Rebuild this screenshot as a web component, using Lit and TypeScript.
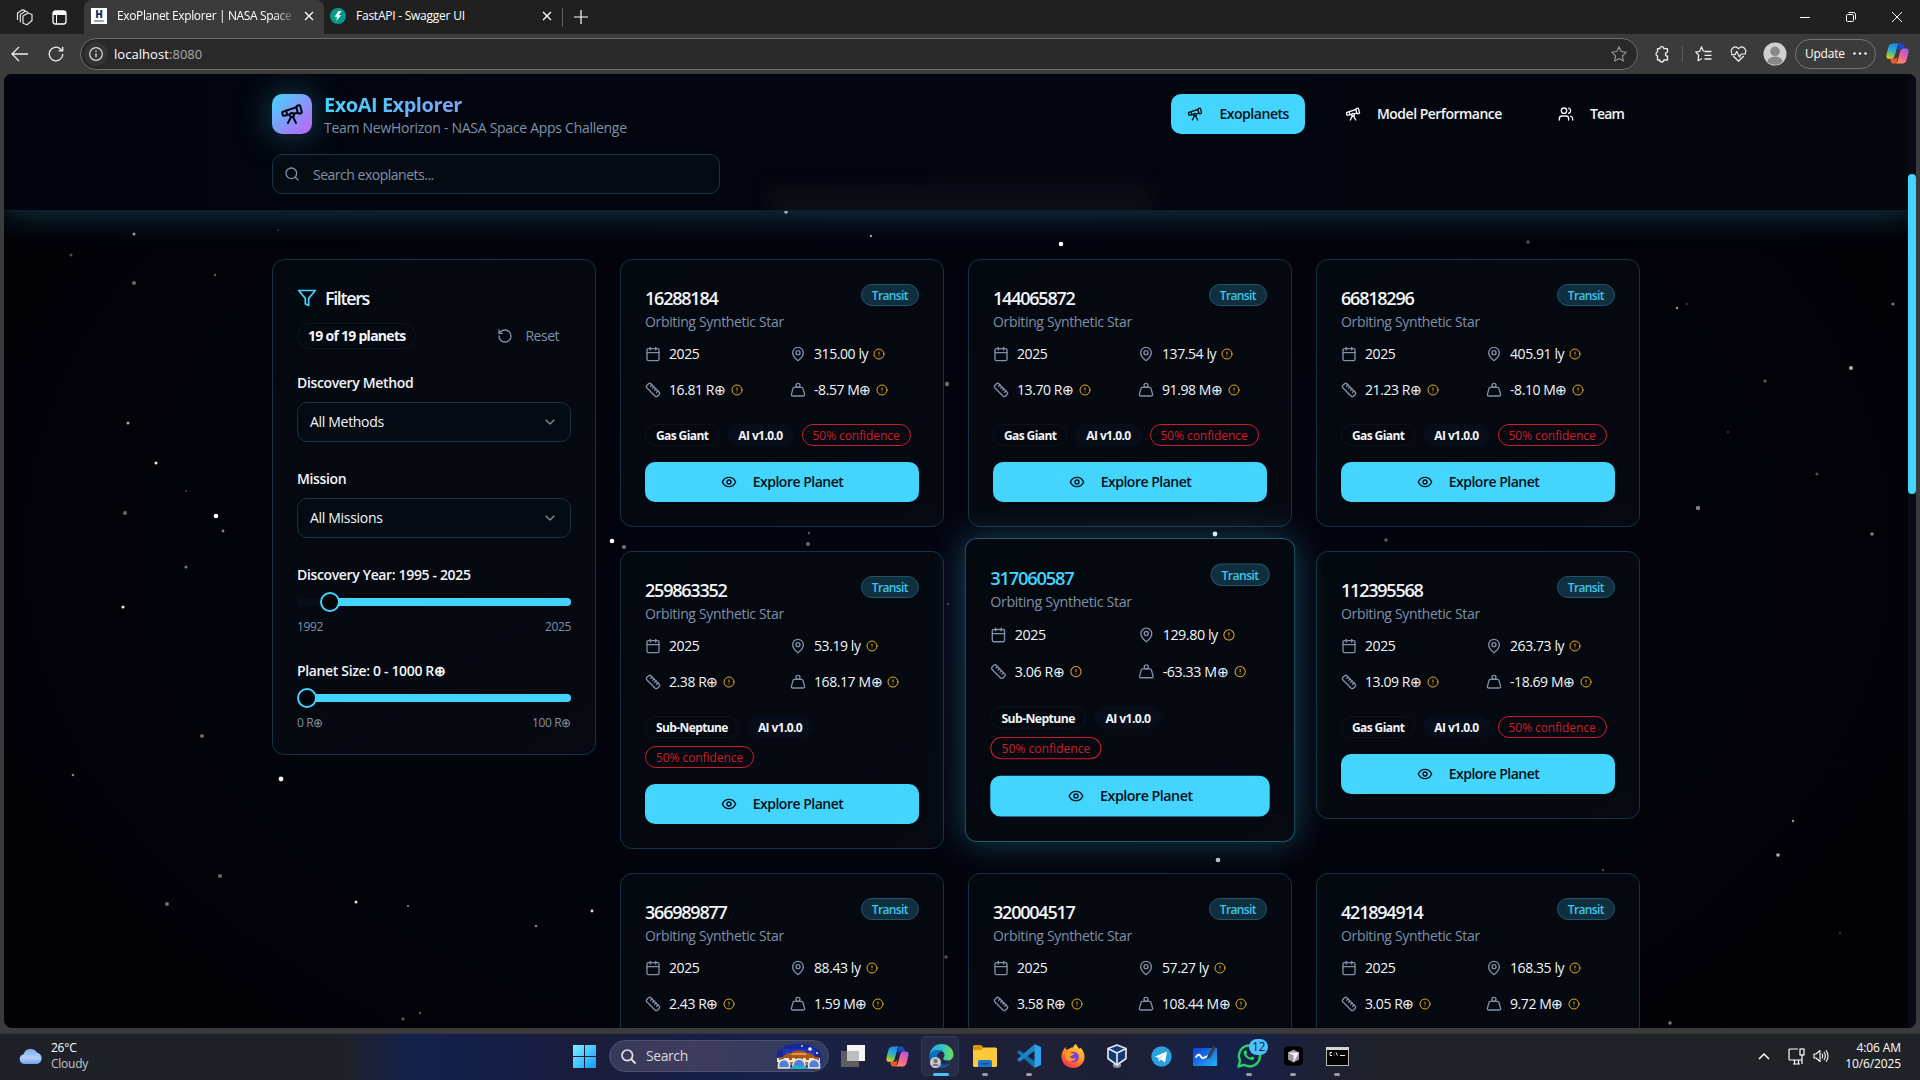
import { LitElement, html, svg, css, nothing } from "lit";
import { customElement, property } from "lit/decorators.js";
import { classMap } from "lit/directives/class-map.js";
import { styleMap } from "lit/directives/style-map.js";

interface Planet {
  id: string;
  dist: string;
  radius: string;
  mass: string;
  kind: string;
  active?: boolean;
}

const planets: Planet[] = [
  { id: "16288184", dist: "315.00", radius: "16.81", mass: "-8.57", kind: "Gas Giant" },
  { id: "144065872", dist: "137.54", radius: "13.70", mass: "91.98", kind: "Gas Giant" },
  { id: "66818296", dist: "405.91", radius: "21.23", mass: "-8.10", kind: "Gas Giant" },
  { id: "259863352", dist: "53.19", radius: "2.38", mass: "168.17", kind: "Sub-Neptune" },
  { id: "317060587", dist: "129.80", radius: "3.06", mass: "-63.33", kind: "Sub-Neptune", active: true },
  { id: "112395568", dist: "263.73", radius: "13.09", mass: "-18.69", kind: "Gas Giant" },
  { id: "366989877", dist: "88.43", radius: "2.43", mass: "1.59", kind: "Sub-Neptune" },
  { id: "320004517", dist: "57.27", radius: "3.58", mass: "108.44", kind: "Sub-Neptune" },
  { id: "421894914", dist: "168.35", radius: "3.05", mass: "9.72", kind: "Sub-Neptune" },
];

/* x, y, radius, opacity */
const stars: number[][] = [
  [134, 160, 1.5, 0.6], [71, 181, 1.5, 0.3], [134, 209, 2, 0.4], [215, 201, 1.3, 0.35], [278, 156, 1, 0.2],
  [128, 349, 1.5, 0.65], [156, 389, 1.5, 0.9], [125, 439, 2, 0.4], [216, 442, 2.3, 1], [223, 457, 1.4, 0.5],
  [186, 493, 1.6, 0.45], [186, 417, 1, 0.25], [123, 533, 1.6, 0.9], [202, 662, 2, 0.4], [73, 701, 1.3, 0.5],
  [281, 705, 2.4, 0.95], [220, 802, 2, 0.4], [167, 830, 2, 0.45], [356, 828, 1.5, 0.9], [408, 832, 1, 0.6],
  [536, 852, 1.3, 0.5], [592, 837, 1.4, 0.9], [420, 939, 1, 0.5], [403, 945, 1.8, 0.3], [786, 138, 1.8, 0.7],
  [871, 162, 1.2, 0.6], [1061, 170, 2.3, 1], [947, 310, 2.2, 0.4], [1528, 168, 1.8, 0.3], [1677, 234, 1.2, 0.6],
  [1687, 230, 1, 0.25], [1893, 230, 1.6, 0.45], [1851, 294, 2, 0.7], [1698, 434, 2.2, 0.5], [1817, 400, 1.6, 0.3],
  [1728, 358, 1, 0.25], [1872, 460, 1.8, 0.5], [1765, 307, 1.8, 0.3], [612, 467, 2.3, 1], [624, 473, 2, 0.45],
  [809, 459, 1.2, 0.35], [808, 470, 2, 0.4], [1215, 460, 2.4, 0.95], [1218, 786, 2.3, 0.75], [1386, 466, 1.8, 0.35],
  [1793, 747, 1.2, 0.6], [1778, 781, 1.8, 0.7], [946, 883, 1.8, 0.3], [948, 530, 1.2, 0.25], [1603, 796, 1.2, 0.3],
  [1670, 949, 1.8, 0.45], [1840, 859, 1, 0.25],
];

const icons: Record<string, unknown> = {
  telescope: svg`<path d="m10.065 12.493-6.18 1.318a.934.934 0 0 1-1.108-.702l-.537-2.15a1.07 1.07 0 0 1 .691-1.265l13.504-4.44"/><path d="m13.56 11.747 4.332-.924"/><path d="m16 21-3.105-6.21"/><path d="M16.485 5.94a2 2 0 0 1 1.455-2.425l1.09-.272a1 1 0 0 1 1.212.727l1.515 6.06a1 1 0 0 1-.727 1.213l-1.09.272a2 2 0 0 1-2.425-1.455z"/><path d="m6.158 8.633 1.114 4.456"/><path d="m8 21 3.105-6.21"/><circle cx="12" cy="13" r="2"/>`,
  users: svg`<path d="M16 21v-2a4 4 0 0 0-4-4H6a4 4 0 0 0-4 4v2"/><circle cx="9" cy="7" r="4"/><path d="M22 21v-2a4 4 0 0 0-3-3.87"/><path d="M16 3.13a4 4 0 0 1 0 7.75"/>`,
  search: svg`<circle cx="11" cy="11" r="8"/><path d="m21 21-4.3-4.3"/>`,
  filter: svg`<path d="M22 3H2l8 9.46V19l4 2v-8.54z"/>`,
  reset: svg`<path d="M3 12a9 9 0 1 0 9-9 9.75 9.75 0 0 0-6.74 2.74L3 8"/><path d="M3 3v5h5"/>`,
  chevron: svg`<path d="m6 9 6 6 6-6"/>`,
  calendar: svg`<path d="M8 2v4"/><path d="M16 2v4"/><rect x="3" y="4" width="18" height="18" rx="2"/><path d="M3 10h18"/>`,
  pin: svg`<path d="M20 10c0 6-8 12-8 12s-8-6-8-12a8 8 0 0 1 16 0Z"/><circle cx="12" cy="10" r="3"/>`,
  ruler: svg`<path d="M21.3 15.3a2.4 2.4 0 0 1 0 3.4l-2.6 2.6a2.4 2.4 0 0 1-3.4 0L2.7 8.7a2.41 2.41 0 0 1 0-3.4l2.6-2.6a2.41 2.41 0 0 1 3.4 0Z"/><path d="m14.5 12.5 2-2"/><path d="m11.5 9.5 2-2"/><path d="m8.5 6.5 2-2"/><path d="m17.5 15.5 2-2"/>`,
  weight: svg`<circle cx="12" cy="5" r="3"/><path d="M6.5 8a2 2 0 0 0-1.905 1.46L2.1 18.5A2 2 0 0 0 4 21h16a2 2 0 0 0 1.925-2.54L19.4 9.5A2 2 0 0 0 17.48 8Z"/>`,
  alert: svg`<circle cx="12" cy="12" r="10"/><path d="M12 8v4"/><path d="M12 16h.01"/>`,
  eye: svg`<path d="M2 12s3-7 10-7 10 7 10 7-3 7-10 7-10-7-10-7Z"/><circle cx="12" cy="12" r="3"/>`,
};

const icon = (name: string, size = 16) => html`<svg class="ic" width=${size} height=${size} viewBox="0 0 24 24"
  fill="none" stroke="currentColor" stroke-width="2" stroke-linecap="round" stroke-linejoin="round">${icons[name]}</svg>`;

const glyph = (w: number, h: number, body: unknown) =>
  html`<svg class="ic" width=${w} height=${h} viewBox="0 0 ${w} ${h}" fill="none">${body}</svg>`;

const copilot = (id: string, size: number) => html`<svg class="ic" width=${size} height=${size} viewBox="0 0 24 24">
  <defs>
    <linearGradient id="${id}a" x1="0.6" y1="0" x2="0.2" y2="1"><stop offset="0" stop-color="#1b8be0"/><stop offset=".45" stop-color="#2aa9d8"/><stop offset=".75" stop-color="#7fc24a"/><stop offset="1" stop-color="#f3cf2c"/></linearGradient>
    <linearGradient id="${id}b" x1="0.8" y1="0" x2="0.2" y2="1"><stop offset="0" stop-color="#a657e8"/><stop offset=".5" stop-color="#f0609a"/><stop offset="1" stop-color="#ff9a4c"/></linearGradient>
  </defs>
  <path d="M13 1.5h3c2 0 2.600 1 3.200 3l.6 2.200h-4c-2 0-3 .8-3.600 2.800z" fill="#174ac4"/>
  <path d="M11 22.500h-3c-2 0-2.600-1-3.200-3l-.5-2h4c2 0 3-.8 3.500-2.800z" fill="#f0552d"/>
  <path d="M7.500 1.500h7c-1.500 0-2.300 1.400-2.700 3l-2.600 9.500c-.6 2.500-1.600 3.500-3.600 3.500h-2.600c-2.400 0-3-2-2.400-4.500l2-8c.6-2.300 2.400-3.500 4.900-3.500z" fill="url(#${id}a)"/>
  <path d="M16.500 22.500h-7c1.500 0 2.300-1.400 2.700-3l2.600-9.500c.6-2.500 1.600-3.300 3.600-3.300h2.600c2.400 0 3 2 2.400 4.300l-2 8c-.6 2.300-2.400 3.500-4.900 3.500z" fill="url(#${id}b)"/>
</svg>`;

const base = css`
  * { box-sizing: border-box; }
  .ic { display: block; flex: none; overflow: visible; }
`;

@customElement("browser-chrome")
class BrowserChrome extends LitElement {
  static styles = [base, css`
    :host { display: block; color: #fff; font: 400 12px/16px "Open Sans", "Noto Sans", sans-serif; letter-spacing: -0.02em; }
    .tabs { display: flex; align-items: center; height: 34px; background: #202020; }
    .lead { display: flex; align-items: center; gap: 19px; width: 84px; padding-left: 16px; }
    .tab { display: flex; align-items: center; height: 34px; width: 240px; padding: 0 10px 2px 7px; }
    .tab.on { background: #3b3b3b; border-radius: 8px 8px 0 0; }
    .tab.off { padding-left: 6px; padding-right: 10px; width: 238px; }
    .fav { display: grid; place-items: center; width: 16px; height: 16px; flex: none; margin-right: 10px; }
    .fav.h { background: #fff; color: #14355c; font: 800 10px/9px "Open Sans", sans-serif; align-content: center; }
    .fav.h i { display: block; width: 10px; height: 2px; margin-top: 1px; background: #9aa6b3; }
    .fav.f { border-radius: 50%; background: #05998b; }
    .name { flex: 1; white-space: nowrap; overflow: hidden; }
    .on .name { margin-right: 8px; letter-spacing: -0.03em; -webkit-mask-image: linear-gradient(90deg, #000 88%, transparent); mask-image: linear-gradient(90deg, #000 88%, transparent); }
    .rule { width: 1px; height: 19px; background: #5c5c5c; margin-right: 11px; }
    .win { display: flex; align-items: center; margin-left: auto; gap: 36px; padding-right: 18px; }
    .bar { display: flex; align-items: center; height: 40px; padding-left: 11px; background: #3b3b3b; padding-bottom: 1px; }
    .nav { display: flex; align-items: center; gap: 20px; width: 69px; }
    .url { display: flex; align-items: center; width: 1558px; height: 32px; border: 1px solid #6d6d6d; border-radius: 16px; background: #292929; padding: 0 10px 0 3px; color: #a9a9a9; font-size: 13px; letter-spacing: 0.004em; margin-top: 1px; }
    .site { display: grid; place-items: center; width: 24px; height: 24px; border-radius: 50%; background: #343434; margin-right: 6px; color: #ddd; }
    .url b { font-weight: 400; color: #fff; }
    .grow { flex: 1; }
    .tools { display: flex; align-items: center; flex: 1; padding-left: 16px; color: #e8e8e8; }
    .tools .sep { width: 1px; height: 16px; background: #5c5c5c; margin: 0 12px 0 12px; }
    .health { display: block; margin: 0 16px 0 18px; }
    .update { display: flex; align-items: center; justify-content: space-between; height: 30px; width: 81px; border: 1px solid #757575; border-radius: 15px; padding: 0 8px 0 9px; color: #fff; margin: 0 10px 0 8px; white-space: nowrap; }
  `];
  render() {
    const close = glyph(10, 10, svg`<path d="M1 1l8 8M9 1l-8 8" stroke="#fff" stroke-width="1.300"/>`);
    return html`
      <div class="tabs">
        <div class="lead">
          ${glyph(17, 17, svg`<g stroke="#e6e6e6" stroke-width="1.200" stroke-linejoin="round"><path d="M7 7l5-3 4 1.500v6l-5 4.300-4-1.500z"/><path d="M4.300 13.300V5.500l5-3.300 3 1"/><path d="M1.500 11V4l5-3.200 3 .8"/></g>`)}
          ${glyph(15, 15, svg`<rect x="1" y="1" width="13" height="13" rx="2.500" stroke="#fff" stroke-width="1.300"/><path d="M1 3.500a2.500 2.500 0 0 1 2.500-2.500h8a2.500 2.500 0 0 1 2.500 2.500v1.500h-13z" fill="#fff"/><path d="M4.500 5v9" stroke="#fff"/>`)}
        </div>
        <div class="tab on">
          <span class="fav h">H<i></i></span>
          <span class="name">ExoPlanet Explorer | NASA Space Apps</span>${close}
        </div>
        <div class="tab off">
          <span class="fav f">${glyph(10, 10, svg`<path d="M5.500 0L1.500 5.800h2.700L3.200 10 8.200 4.200H5.600L8.500 0z" fill="#fff"/>`)}</span>
          <span class="name">FastAPI - Swagger UI</span>${close}
        </div>
        <div class="rule"></div>
        ${glyph(14, 14, svg`<path d="M7 0v14M0 7h14" stroke="#fff" stroke-width="1.200"/>`)}
        <div class="win">
          ${glyph(10, 10, svg`<path d="M0 5.500h10" stroke="#fff"/>`)}
          ${glyph(10, 10, svg`<rect x=".5" y="2.500" width="7" height="7" rx="1.200" stroke="#fff"/><path d="M2.500.5h5a2 2 0 0 1 2 2v5" stroke="#fff"/>`)}
          ${glyph(10, 10, svg`<path d="M0 0l10 10M10 0L0 10" stroke="#fff"/>`)}
        </div>
      </div>
      <div class="bar">
        <div class="nav">
          ${glyph(17, 16, svg`<path d="M8 1L1 8l7 7M1 8h16" stroke="#eee" stroke-width="1.300"/>`)}
          ${glyph(16, 16, svg`<path d="M14.800 8A6.800 6.800 0 1 1 12.500 2.900L14.500 4.700M14.700.7v4.200h-4.200" stroke="#eee" stroke-width="1.300"/>`)}
        </div>
        <div class="url">
          <span class="site">${glyph(14, 14, svg`<circle cx="7" cy="7" r="6.300" stroke="#ddd" stroke-width="1.200"/><path d="M7 6.200v4M7 3.500v1.400" stroke="#ddd" stroke-width="1.300"/>`)}</span>
          <span><b>localhost</b>:8080</span><span class="grow"></span>
          ${glyph(16, 16, svg`<path d="M8 .8l2.200 4.700 5 .7-3.700 3.600.9 5.200L8 12.500 3.600 15l.9-5.200L.8 6.200l5-.7z" stroke="#9a9a9a" stroke-width="1.100" stroke-linejoin="round"/>`)}
        </div>
        <div class="tools">
          ${glyph(16, 16, svg`<path d="M3.500 2.700h2.300a2 2 0 0 1 4 0H13.500v3.500a2 2 0 1 0 0 4V14H9.800a2 2 0 0 1-4 0H3.500v-3.800a2.200 2.200 0 0 1 0-4.200z" stroke="#eee" stroke-width="1.300" stroke-linejoin="round"/>`)}
          <span class="sep"></span>
          ${glyph(17, 16, svg`<path d="M9.500 5.200L8.300 5 6.500.8 4.700 5.400.7 6l3 3.200L3 14.700l4-2.300" stroke="#eee" stroke-width="1.200" stroke-linejoin="round"/><path d="M9.500 5.500h7M9.500 9.300h7M9.500 13h7" stroke="#eee" stroke-width="1.300"/>`)}
          <span class="health">${glyph(17, 16, svg`<path d="M2 7.500C-.5 3.500 4.500-1.500 8.500 2.700c4-4.200 9 .8 6.500 4.800M3.200 10l5.300 5.200 5.300-5.200M1 8.700h4l1.700-3.200 2.800 5.500 1.700-3h4.800" stroke="#eee" stroke-width="1.200" stroke-linejoin="round"/>`)}</span>
          ${glyph(24, 24, svg`<circle cx="12" cy="12" r="11.500" fill="#d2d0ce"/><circle cx="12" cy="9.300" r="4.800" fill="#8a8886"/><path d="M4.500 20a7.500 5.500 0 0 1 15 0a11.500 11.500 0 0 1-15 0" fill="#8a8886"/>`)}
          <span class="update">Update ${glyph(14, 3, svg`<circle cx="1.500" cy="1.500" r="1.200" fill="#fff"/><circle cx="7" cy="1.500" r="1.200" fill="#fff"/><circle cx="12.500" cy="1.500" r="1.200" fill="#fff"/>`)}</span>
          ${copilot("t", 23)}
        </div>
      </div>`;
  }
}

@customElement("planet-card")
class PlanetCard extends LitElement {
  @property({ attribute: false }) planet!: Planet;
  static styles = [base, css`
    :host { display: block; }
    .card { position: relative; padding: 24px; border: 1px solid #133543; border-radius: 12px; background: linear-gradient(145deg, #04080f, #060911); color: #f2f5f8; }
    .card.active { border-color: #1f5a70; transform: translateY(-10px) scale(1.02); box-shadow: 0 0 34px rgba(67, 213, 254, .3); }
    .head { display: flex; justify-content: space-between; align-items: flex-start; }
    h3 { margin: 0; font: 650 18px/28px "Open Sans", sans-serif; letter-spacing: -0.068em; }
    .active h3 { color: #43d5fe; font-weight: 600; }
    .sub { font-size: 14px; line-height: 20px; color: #8090a6; letter-spacing: -0.025em; }
    .tag { height: 22px; padding: 0 10px; border: 1px solid #205569; border-radius: 11px; background: #102f3e; color: #3ec6ec; font-size: 12px; line-height: 21px; font-weight: 600; letter-spacing: -0.05em; }
    .stats { display: grid; grid-template-columns: 1fr 1fr; gap: 16px; margin: 12px 0 24px; }
    .stat { display: flex; align-items: center; gap: 8px; height: 20px; font-size: 14px; line-height: 20px; letter-spacing: -0.03em; white-space: nowrap; }
    .stat > .ic { color: #8090a6; }
    .warn { color: #e8a81e; margin-left: -3px; }
    .tags { display: flex; flex-wrap: wrap; gap: 8px; margin-bottom: 16px; }
    .pill { height: 22px; padding: 0 10px; border: 1px solid #0d1420; border-radius: 11px; font-size: 12px; line-height: 22px; font-weight: 700; letter-spacing: -0.05em; white-space: nowrap; }
    .pill.solid { border-color: #080e19; background: #080e19; }
    .pill.low { border-color: #cb1e2d; color: #cb1e2d; font-weight: 400; letter-spacing: -0.006em; }
    .go { display: flex; align-items: center; justify-content: center; gap: 16px; height: 40px; border-radius: 10px; background: #43d5fe; color: #03111a; font-size: 14px; font-weight: 600; letter-spacing: -0.035em; line-height: 20px; }
  `];
  render() {
    const p = this.planet;
    const warn = html`<span class="warn">${icon("alert", 12)}</span>`;
    return html`<article class=${classMap({ card: true, active: !!p.active })}>
      <div class="head"><div><h3>${p.id}</h3><div class="sub">Orbiting Synthetic Star</div></div><span class="tag">Transit</span></div>
      <div class="stats">
        <div class="stat">${icon("calendar")}<span>2025</span></div>
        <div class="stat">${icon("pin")}<span>${p.dist} ly</span>${warn}</div>
        <div class="stat">${icon("ruler")}<span>${p.radius} R⊕</span>${warn}</div>
        <div class="stat">${icon("weight")}<span>${p.mass} M⊕</span>${warn}</div>
      </div>
      <div class="tags"><span class="pill">${p.kind}</span><span class="pill solid">AI v1.0.0</span><span class="pill low">50% confidence</span></div>
      <div class="go">${icon("eye")}<span>Explore Planet</span></div>
    </article>`;
  }
}

@customElement("filter-panel")
class FilterPanel extends LitElement {
  static styles = [base, css`
    :host { display: block; }
    .panel { height: 496px; padding: 24px; border: 1px solid #133543; border-radius: 12px; background: linear-gradient(145deg, #04080f, #060911); color: #f2f5f8; }
    .title { display: flex; align-items: center; gap: 8px; font-size: 18px; line-height: 28px; font-weight: 650; letter-spacing: -0.077em; }
    .title .ic { color: #43d5fe; }
    .row { display: flex; align-items: center; justify-content: space-between; height: 32px; margin: 8px 0 24px; font-size: 14px; }
    .count { height: 26px; padding: 0 10px; border: 1px solid #0d1624; border-radius: 13px; line-height: 24px; font-weight: 700; letter-spacing: -0.052em; }
    .reset { display: flex; align-items: center; gap: 12px; padding-right: 12px; color: #8090a6; font-weight: 500; letter-spacing: -0.035em; }
    .fields { display: grid; gap: 30px; }
    .field { height: 66px; }
    .label { height: 14px; line-height: 14px; font-size: 14px; font-weight: 650; letter-spacing: -0.025em; white-space: nowrap; }
    .select { display: flex; align-items: center; justify-content: space-between; height: 40px; margin-top: 12px; padding: 0 12px; border: 1px solid #133543; border-radius: 10px; background: #050b13; font-size: 14px; letter-spacing: -0.022em; }
    .select .ic { color: #858a91; }
    .slider { display: flex; align-items: center; height: 20px; margin-top: 10px; }
    .lead { height: 8px; border-radius: 4px 0 0 4px; background: #080e19; }
    .thumb { flex: none; width: 20px; height: 20px; border: 2px solid #43d5fe; border-radius: 50%; background: #020309; }
    .fill { flex: 1; height: 8px; border-radius: 0 4px 4px 0; background: #43d5fe; margin-left: -1px; }
    .ends { display: flex; justify-content: space-between; margin-top: 7px; font-size: 12px; line-height: 16px; color: #8090a6; letter-spacing: -0.03em; }
  `];
  private slider(label: string, offset: number, lo: string, hi: string) {
    return html`<div class="field"><div class="label">${label}</div>
      <div class="slider"><div class="lead" style=${styleMap({ width: `${offset}px` })}></div><div class="thumb"></div><div class="fill"></div></div>
      <div class="ends"><span>${lo}</span><span>${hi}</span></div></div>`;
  }
  render() {
    return html`<aside class="panel">
      <div class="title">${icon("filter", 20)}Filters</div>
      <div class="row"><span class="count">19 of 19 planets</span><span class="reset">${icon("reset", 16)}Reset</span></div>
      <div class="fields">
        <div class="field"><div class="label">Discovery Method</div><div class="select"><span>All Methods</span>${icon("chevron")}</div></div>
        <div class="field"><div class="label">Mission</div><div class="select"><span>All Missions</span>${icon("chevron")}</div></div>
        ${this.slider("Discovery Year: 1995 - 2025", 23, "1992", "2025")}
        ${this.slider("Planet Size: 0 - 1000 R⊕", 0, "0 R⊕", "100 R⊕")}
      </div>
    </aside>`;
  }
}

@customElement("exo-page")
class ExoPage extends LitElement {
  static styles = [base, css`
    :host { display: block; background: #3b3b3b; padding: 0 4px 5px; font: 400 14px/20px "Open Sans", "Noto Sans", sans-serif; }
    .view { position: relative; height: 954px; overflow: hidden; border-radius: 8px; background: radial-gradient(1100px 700px at 50% 50%, #040411, transparent), #020207; }
    .sky { position: absolute; left: -4px; top: 0; }
    header { position: relative; height: 137px; border-bottom: 1px solid #101b2b; background: linear-gradient(90deg, #02050d, #03060f 60%, #04070b); box-shadow: 0 0 32px rgba(67, 213, 254, .3); }
    .haze { position: absolute; left: 0; top: 0; width: 100%; height: 136px; overflow: hidden; }
    .haze::before { content: ""; position: absolute; left: 765px; top: 112px; width: 385px; height: 44px; background: #0a0d15; filter: blur(8px); }
    .wrap { position: relative; width: 1368px; margin-left: 268px; }
    .top { display: flex; align-items: center; height: 64px; padding-top: 16px; }
    .brand { padding-top: 1px; }
    .logo { display: grid; place-items: center; width: 40px; height: 40px; border-radius: 10px; background: linear-gradient(135deg, #43d5fe, #c060f5); box-shadow: 0 0 34px rgba(67, 213, 254, .35); color: #03060f; margin-right: 12px; }
    h1 { margin: 0; width: max-content; font: 700 20px/28px "Open Sans", sans-serif; letter-spacing: -0.024em; background: linear-gradient(90deg, #43d5fe, #7fa0f8); -webkit-background-clip: text; background-clip: text; color: transparent; }
    .team { color: #8090a6; line-height: 20px; letter-spacing: -0.020em; margin-top: -1px; }
    nav { display: flex; gap: 24px; margin-left: auto; color: #f2f5f8; font-weight: 650; letter-spacing: -0.036em; }
    .link { display: flex; align-items: center; gap: 16px; height: 40px; padding: 0 16px; border-radius: 10px; white-space: nowrap; }
    .link.on { background: #43d5fe; color: #03111a; font-weight: 600; letter-spacing: -0.033em; }
    .link:last-child { letter-spacing: -0.06em; }
    .search { display: flex; align-items: center; gap: 12px; width: 448px; height: 40px; margin-top: 16px; padding: 0 12px 0 11px; border: 1px solid #133543; border-radius: 10px; background: #050b13; color: #8090a6; letter-spacing: -0.035em; }
    .search span { padding: 1px 0 0 1px; }
    main { position: relative; display: grid; grid-template-columns: 324px 996px; gap: 24px; align-items: start; padding-top: 48px; }
    .cards { display: grid; grid-template-columns: repeat(3, 324px); gap: 24px; align-items: start; }
    .cards .lift { position: relative; z-index: 1; }
    .track { position: absolute; right: 0; top: 0; width: 8px; height: 100%; background: #080b14; }
    .knob { height: 320px; margin-top: 100px; border-radius: 4px; background: #43d5fe; }
  `];
  render() {
    return html`<div class="view">
      <svg class="sky" width="1920" height="954" viewBox="0 0 1920 954">
        ${stars.map(([x, y, r, o]) => svg`<circle cx=${x} cy=${y} r=${r} fill="#fff" fill-opacity=${o}/>`)}
      </svg>
      <header><div class="haze"></div><div class="wrap">
        <div class="top">
          <div class="logo">${icon("telescope", 24)}</div>
          <div class="brand"><h1>ExoAI Explorer</h1><div class="team">Team NewHorizon - NASA Space Apps Challenge</div></div>
          <nav>
            <span class="link on">${icon("telescope")}<span>Exoplanets</span></span>
            <span class="link">${icon("telescope")}<span>Model Performance</span></span>
            <span class="link">${icon("users")}<span>Team</span></span>
          </nav>
        </div>
        <div class="search">${icon("search")}<span>Search exoplanets...</span></div>
      </div></header>
      <main class="wrap">
        <filter-panel></filter-panel>
        <div class="cards">${planets.map((p) => html`<planet-card class=${p.active ? "lift" : nothing} .planet=${p}></planet-card>`)}</div>
      </main>
      <div class="track"><div class="knob"></div></div>
    </div>`;
  }
}

@customElement("task-bar")
class TaskBar extends LitElement {
  static styles = [base, css`
    :host { display: block; height: 47px; border-top: 1px solid #34363b; color: #fff; font: 400 12px/16px "Open Sans", "Noto Sans", sans-serif; letter-spacing: -0.02em;
      background: linear-gradient(90deg, #1e2228 0, #1e2228 340px, #14214b 410px, #141f48 490px, #1b1d3a 590px, #14204a 720px, #1b2140 860px, #1d2036 1000px, #1d2035 1130px, #16214b 1235px, #1d2136 1310px, #1f2226 1400px, #1f2226 100%); }
    .bar { display: flex; align-items: center; height: 44px; }
    .weather { display: flex; align-items: center; gap: 8px; width: 562px; padding-left: 19px; }
    .dim { color: #c2c4c9; }
    .slot { display: grid; place-items: center; position: relative; width: 44px; height: 44px; }
    .pill { display: flex; align-items: center; width: 220px; height: 32px; margin: 0 2px 0 3px; padding: 0 5px 0 11px; border: 1px solid #4b5070; border-radius: 16px; background: linear-gradient(90deg, #37395a, #403c5c 35%, #2f3b60); font-size: 14px; color: #d5d7de; letter-spacing: -0.03em; }
    .pill span { flex: 1; padding-left: 10px; }
    .slot.on::before { content: ""; position: absolute; inset: 2px 4px 2px 2px; border: 1px solid #343854; border-radius: 5px; background: #272b48; }
    .slot .ic { position: relative; }
    .run::after, .on::after { content: ""; position: absolute; left: 19px; bottom: 2px; width: 6px; height: 3px; border-radius: 2px; background: #9b9ca6; }
    .on::after { left: 14px; width: 16px; background: #4cc2ff; }
    .badge { position: absolute; left: 22px; top: 5px; width: 19px; height: 16px; border-radius: 8px; background: #4cc2ff; color: #0a2436; text-align: center; }
    .tray { display: flex; align-items: center; margin-left: auto; padding-right: 19px; }
    .gap { width: 18px; } .gap2 { width: 8px; } .gap3 { width: 16px; }
    .clock { text-align: right; letter-spacing: -0.01em; }
  `];
  render() {
    return html`<div class="bar">
      <div class="weather">
        ${glyph(24, 17, svg`<defs><linearGradient id="c" x2="0" y2="1"><stop stop-color="#7fb0f2"/><stop offset=".6" stop-color="#b4d0fb"/><stop offset="1" stop-color="#6f9df0"/></linearGradient></defs><path d="M5 16a5 5 0 0 1-.5-9.800A7.500 7.500 0 0 1 18 4.500 6 6 0 0 1 18.500 16z" fill="url(#c)"/>`)}
        <div>26°C<div class="dim">Cloudy</div></div>
      </div>
      <div class="slot">${glyph(23, 23, svg`<defs><linearGradient id="w" x2="1" y2="1"><stop stop-color="#7ff0ff"/><stop offset="1" stop-color="#109cff"/></linearGradient></defs><path d="M0 0h11v11H0zM12 0h11v11H12zM0 12h11v11H0zM12 12h11v11H12z" fill="url(#w)"/>`)}</div>
      <div class="pill">
        ${glyph(15, 15, svg`<circle cx="6.300" cy="6.300" r="5.300" stroke="#e2e3e8" stroke-width="1.700"/><path d="M10.200 10.200l4.300 4.300" stroke="#e2e3e8" stroke-width="1.900"/>`)}
        <span>Search</span>
        ${glyph(48, 26, svg`<path d="M2 12C1 6 7 7 9 4c3-3 7-1 10-3 4-1 7 0 10 1 4-2 8 0 10 3 4 0 7 4 7 9v9q-5 3-22 3T2 23z" fill="#14279f"/><path d="M8 6h32v6H8z" fill="#1f37b8"/><path d="M18 8.500q6-2 12 0l1 1.500h4l5 3v2H8v-2l5-3h4z" fill="#a9581a"/><path d="M17 10h14l1 2H16z" fill="#e0963f"/><path d="M2 15h43v4H2z" fill="#f2e3cc"/><path d="M4 14h5v3H4zM39 14h5v3h-5zM14 14h3v3h-3zM20 14h8v2.500h-8zM31 14h3v3h-3z" fill="#a5521a"/><path d="M3 19h41v3H3z" fill="#b5692c"/><path d="M3.500 25v-3a5 5 0 0 1 11 0v3zM18 25v-3a6 6 0 0 1 12 0v3zM33.500 25v-3a5 5 0 0 1 11 0v3z" fill="#4b82dc" stroke="#f4ead8" stroke-width="1.500"/><path d="M18 23h12l4 3H14z" fill="#20b6c8"/><circle cx="35" cy="6" r="1.800" fill="#fff"/><circle cx="27" cy="3" r="1" fill="#ccd"/><circle cx="42" cy="10" r="1" fill="#fff"/>`)}
      </div>
      <div class="slot">${glyph(24, 22, svg`<rect x="0" y="6" width="18" height="16" fill="#5e5e60"/><rect x="6" y="0" width="18" height="16" fill="#f4f4f4"/><rect x="6" y="6" width="12" height="10" fill="#bdbdbf"/>`)}</div>
      <div class="slot">${copilot("b", 23)}</div>
      <div class="slot on">${glyph(25, 24, svg`<defs><linearGradient id="e1" x2="1"><stop stop-color="#29a8e8"/><stop offset=".5" stop-color="#2fc3c9"/><stop offset="1" stop-color="#6fe04a"/></linearGradient><linearGradient id="e2" x2="0.500" y2="1"><stop stop-color="#1277cf"/><stop offset="1" stop-color="#0c59a4"/></linearGradient></defs><path d="M.5 12C1 4.500 6 0 12.500 0S24.500 5 24.500 10.500c0 4-3 6-6 6s-4.500-1.200-4.300-2.200c.3-.8 1.300-1.300 1.300-3.300 0-2.500-2.500-5-6.500-5C5 6 1.500 8 .5 12z" fill="url(#e1)"/><path d="M.5 12C1.500 8 5 6 9 6c2 0 3.500.6 4.600 1.500C10 7 8 10 8.200 13.500c.3 5 5 8.500 9.800 7 1.500-.4 3-1 4-1.800-2 3.300-5.500 5.300-9.700 5.300C5.500 24 0 19 .5 12z" fill="url(#e2)"/><circle cx="6.500" cy="18.500" r="5.500" fill="#c9c9c9"/><circle cx="6.500" cy="17" r="2.200" fill="#77787a"/><path d="M3 22a3.600 2.800 0 0 1 7 0z" fill="#77787a"/>`)}</div>
      <div class="slot run">${glyph(24, 22, svg`<path d="M0 1.500Q0 0 1.500 0H8l2.500 2.500V7H0z" fill="#d9940f"/><path d="M0 5h8l3-2.500h11.500q1.500 0 1.500 1.500V20.500Q24 22 22.500 22h-21Q0 22 0 20.500z" fill="#fdc93a"/><path d="M5 22v-5q0-2 2-2h10q2 0 2 2v5z" fill="#1877c9"/><path d="M8 18h8v1.500H8z" fill="#0c4f96"/>`)}</div>
      <div class="slot run">${glyph(24, 24, svg`<path d="M17.500 24L0 8.500 2.300 6l15.700 11.500z" fill="#1470b5"/><path d="M17.500 0L0 15.500l2.300 2.500 15.700-11.500z" fill="#1b82cc"/><path d="M17.500 0L24 3v18l-6.500 3z" fill="#2ea3ec"/>`)}</div>
      <div class="slot">${glyph(24, 24, svg`<defs><linearGradient id="f" x1=".8" x2=".2" y2="1"><stop stop-color="#ffe14a"/><stop offset=".5" stop-color="#ff8a1f"/><stop offset="1" stop-color="#f5245c"/></linearGradient></defs><path d="M4.500 3q0 2 1.500 3c3-2 4-2.500 6-2.500Q12 1.500 15 0q1 3 4 5l.5-1.500Q23.500 8 23.500 13C23.500 19 18.500 24 12 24S.5 19 .5 12.500C.5 8 2.500 6 4.500 3z" fill="url(#f)"/><circle cx="12.500" cy="13" r="5.300" fill="#7a3fd8"/><path d="M4 9c4-2 6 1 9 .5 0 2-3 1.800-4 3.500 1 2 4 2 6 .8-1 3-4 4.200-7 3.200-3-1-4.500-4-4-8z" fill="#ff9a22"/>`)}</div>
      <div class="slot">${glyph(20, 24, svg`<path d="M6 20q-1 4 4 4t4-4z" fill="#7f93ad"/><path d="M10 1l9 3.500v10L10 21l-9-6.500v-10z" fill="#163a70" stroke="#dfe7f0" stroke-width="1.700" stroke-linejoin="round"/><path d="M1 4.500l9 4.500 9-4.500M10 9v12" stroke="#dfe7f0" stroke-width="1.700"/>`)}</div>
      <div class="slot">${glyph(21, 21, svg`<circle cx="10.500" cy="10.500" r="10.200" fill="#2aa1dc"/><path d="M4 10.500l12-5-2 11-4-3-2 2-.5-3.500z" fill="#fff"/><path d="M7.500 12l6-4.500-4.500 5.500-1 2.500z" fill="#b9d9ec"/>`)}</div>
      <div class="slot">${glyph(24, 20, svg`<defs><linearGradient id="k" x2="1" y2="1"><stop stop-color="#1238d8"/><stop offset="1" stop-color="#22b5f4"/></linearGradient></defs><rect y="2" width="24" height="18" rx="1" fill="url(#k)"/><path d="M3 11q3-4 4.500-1t4 1.500L15 10" stroke="#fff" stroke-width="1.800" stroke-linecap="round"/><path d="M14 11l6-11 3 1.500-6 10.500-3 1z" fill="#3d4046"/>`)}</div>
      <div class="slot run">${glyph(24, 24, svg`<path d="M1.500 22.500l1.700-5.800A10.500 10.500 0 1 1 7 20.800z" stroke="#28cf63" stroke-width="2.400" stroke-linejoin="round"/><path d="M8 6.500c1-.8 1.500 0 2.200 2 .3.900-.9 1.500-.6 2 .8 1.500 2 2.500 3.500 3 .6.200 1.200-1.300 1.900-1.100 2 .8 2.600 1.200 2.200 2-.8 1.800-2.600 2-4.700 1.200-2.800-1.100-5-3.300-5.800-5.800-.4-1.400.1-2.600 1.300-3.300z" fill="#28cf63"/>`)}<span class="badge">12</span></div>
      <div class="slot run">${glyph(19, 20, svg`<rect y=".5" width="19" height="19" rx="4" fill="#000"/><path d="M9.500 3.500l5.500 3v7l-5.500 3-5.500-3v-7z" fill="#9a9a9a"/><path d="M4 6.500h11l-5.500 10V9.500z" fill="#f2f2f2"/>`)}</div>
      <div class="slot run">${glyph(23, 19, svg`<rect x=".5" y=".5" width="22" height="18" fill="#050505" stroke="#b8b8b8"/><path d="M0 0h23v3H0z" fill="#d4d4d4"/><path d="M6 5.500H4v3h2M8 6v.5M8 8v.5M10 5.500l1.500 3M14 8.500h5" stroke="#e8e8e8"/>`)}</div>
      <div class="tray">
        ${glyph(12, 7, svg`<path d="M1 6l5-5 5 5" stroke="#fff" stroke-width="1.500"/>`)}<span class="gap"></span>
        ${glyph(17, 17, svg`<path d="M10 1H2Q1 1 1 2v9q0 1 1 1h12M5 16h7M6.500 12v4M10.500 12v4M14 7v9" stroke="#fff" stroke-width="1.200"/><rect x="12" y="1" width="4" height="6" stroke="#fff" stroke-width="1.200"/>`)}<span class="gap2"></span>
        ${glyph(16, 14, svg`<path d="M1 5h2l4-3.500v11L3 9H1z" stroke="#fff" stroke-width="1.100" stroke-linejoin="round"/><path d="M9 4.500q1.500 2.500 0 5M11 3q2.700 4 0 8M13 1.200q4 5.800 0 11.600" stroke="#fff" stroke-width="1.100"/>`)}<span class="gap3"></span>
        <div class="clock">4:06 AM<br>10/6/2025</div>
      </div>
    </div>`;
  }
}

@customElement("app-root")
class AppRoot extends LitElement {
  static styles = css`
    :host { display: flex; flex-direction: column; width: 1920px; height: 1080px; overflow: hidden; background: #3b3b3b; }
  `;
  render() {
    return html`<browser-chrome></browser-chrome><exo-page></exo-page><task-bar></task-bar>`;
  }
}
